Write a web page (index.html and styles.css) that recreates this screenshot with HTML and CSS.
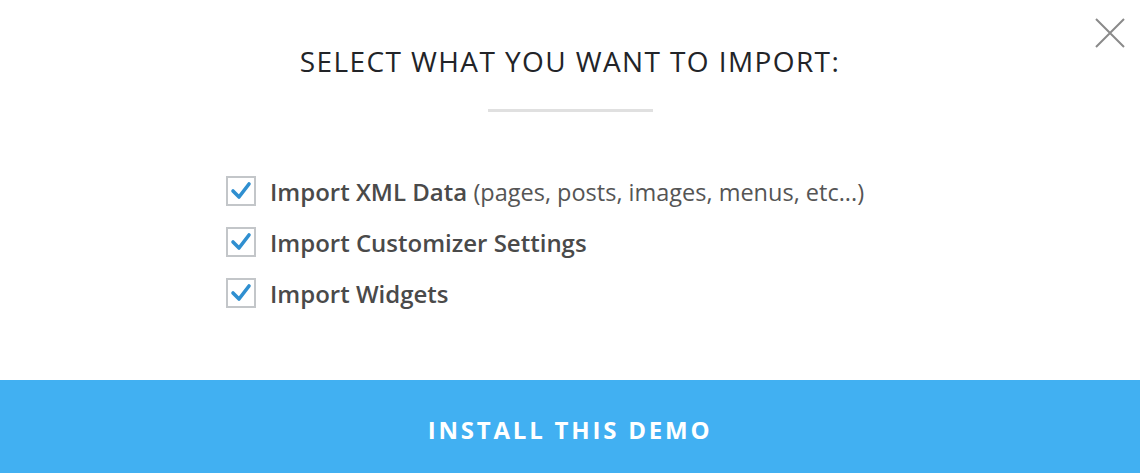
FILE: index.html
```html
<!DOCTYPE html>
<html lang="en">
<head>
  <meta charset="UTF-8">
  <title>Import Demo</title>
  <link rel="stylesheet" href="styles.css">
</head>
<body>
  <div class="modal">
    <button class="close" aria-label="Close">
      <svg width="30" height="30" viewBox="0 0 30 30">
        <path d="M1 1 L29 29 M29 1 L1 29" stroke="#8a8a8a" stroke-width="2" fill="none"/>
      </svg>
    </button>

    <div class="content">
      <h2 class="title">Select what you want to import:</h2>
      <div class="divider"></div>

      <ul class="options">
        <li>
          <span class="check">
            <svg width="22" height="22" viewBox="0 0 22 22"><path d="M3 11 L9 17 L19 4" stroke="#2f8fd0" stroke-width="3.6" fill="none" stroke-linecap="round" stroke-linejoin="round"/></svg>
          </span>
          <span class="label">Import XML Data <span class="note">(pages, posts, images, menus, etc...)</span></span>
        </li>
        <li>
          <span class="check">
            <svg width="22" height="22" viewBox="0 0 22 22"><path d="M3 11 L9 17 L19 4" stroke="#2f8fd0" stroke-width="3.6" fill="none" stroke-linecap="round" stroke-linejoin="round"/></svg>
          </span>
          <span class="label">Import Customizer Settings</span>
        </li>
        <li>
          <span class="check">
            <svg width="22" height="22" viewBox="0 0 22 22"><path d="M3 11 L9 17 L19 4" stroke="#2f8fd0" stroke-width="3.6" fill="none" stroke-linecap="round" stroke-linejoin="round"/></svg>
          </span>
          <span class="label">Import Widgets</span>
        </li>
      </ul>
    </div>

    <button class="install">Install this demo</button>
  </div>
</body>
</html>
```

FILE: styles.css
```css
body {
  margin: 0;
  font-family: 'Open Sans', 'Noto Sans', sans-serif;
  background: #ffffff;
  color: #444;
}

.modal {
  position: relative;
  height: 473px;
  display: flex;
  flex-direction: column;
}

.close {
  position: absolute;
  top: 18px;
  right: 15px;
  background: none;
  border: none;
  padding: 0;
  cursor: pointer;
}

.content {
  flex: 1;
  padding-top: 42px;
}

.title {
  margin: 0;
  text-align: center;
  text-transform: uppercase;
  font-size: 28px;
  font-weight: 500;
  letter-spacing: 1.4px;
  color: #222428;
  line-height: 38px;
}

.divider {
  width: 165px;
  height: 3px;
  background: #e0e0e0;
  margin: 29px auto 0;
}

.options {
  list-style: none;
  width: 688px;
  margin: 64px auto 0;
  padding: 0;
  display: flex;
  flex-direction: column;
  gap: 21px;
}

.options li {
  display: flex;
  align-items: center;
  gap: 14px;
  height: 30px;
}

.check {
  width: 26px;
  height: 26px;
  border: 2px solid #c3c6c9;
  display: flex;
  align-items: center;
  justify-content: center;
  background: #fff;
}

.label {
  font-size: 24px;
  font-weight: 600;
  color: #4a4a4a;
}

.note {
  font-weight: 400;
  font-size: 23.5px;
  color: #555;
}

.install {
  height: 93px;
  padding-top: 6px;
  border: none;
  background: #41b0f2;
  color: #ffffff;
  font-family: inherit;
  font-size: 24px;
  font-weight: 700;
  letter-spacing: 2.8px;
  text-transform: uppercase;
  cursor: pointer;
}
```
